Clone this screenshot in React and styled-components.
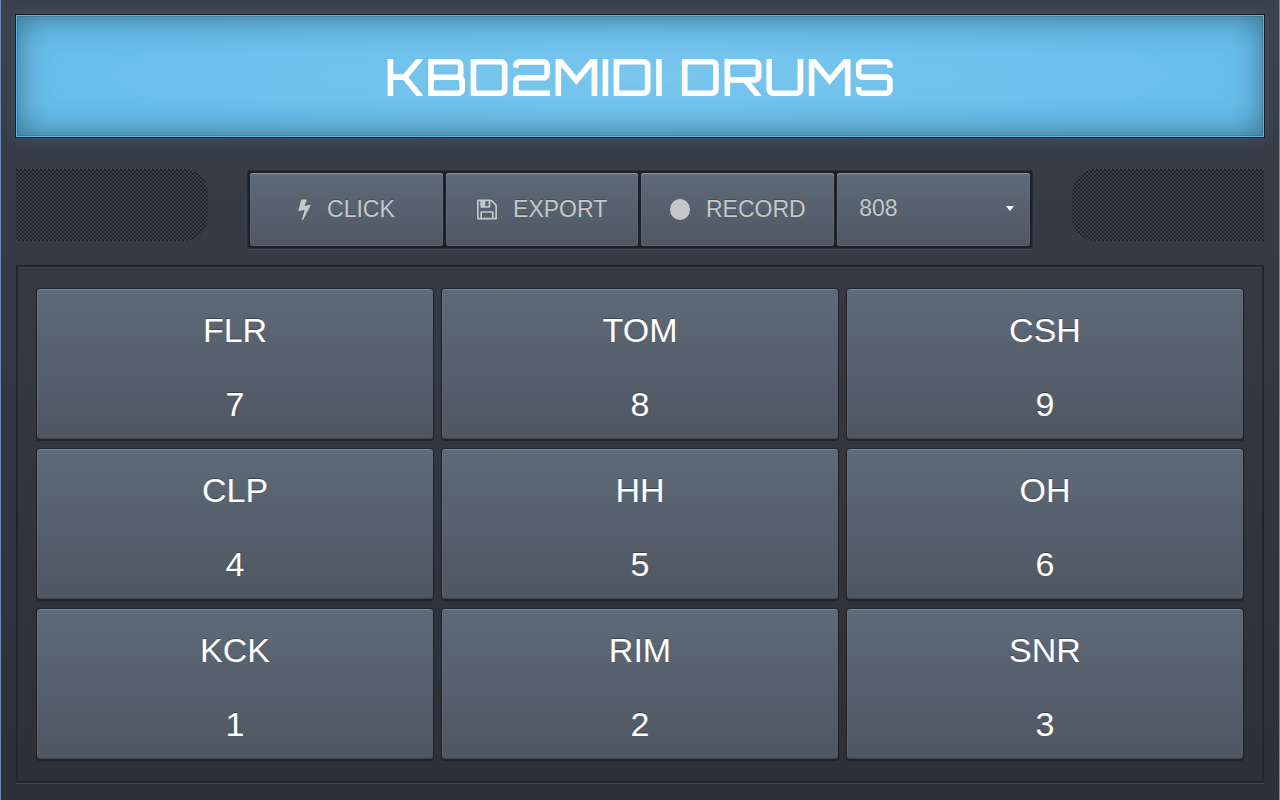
import React, { useState } from 'react';
import styled, { createGlobalStyle, css } from 'styled-components';

const GlobalStyle = createGlobalStyle`
  *, *::before, *::after { box-sizing: border-box; }
  body {
    margin: 0;
    background: #2d3138;
    font-family: "Liberation Sans", Arial, sans-serif;
  }
`;

const Page = styled.div`
  min-height: 100vh;
  padding: 14px 14px 16px;
  border: solid #6f85b5;
  border-width: 0 1px;
  background: linear-gradient(#3a414b 0%, #353b45 30%, #2c3037 100%);
`;

const Banner = styled.header`
  display: flex;
  align-items: center;
  justify-content: center;
  height: 124px;
  border: 1px solid #15202a;
  background: radial-gradient(ellipse at center, #7ac6ee 0%, #62bcea 90%);
  box-shadow:
    inset 0 0 0 1px #5cb4e2,
    inset 0 0 0 2px rgba(30, 70, 95, 0.25),
    inset 0 0 32px rgba(40, 70, 80, 0.7),
    0 0 14px rgba(95, 180, 220, 0.2);
`;

const Title = styled.h1`
  margin: 0;
  color: #fff;
  font: 500 51px/64px Orbitron, "DejaVu Sans", sans-serif;
`;

const Controls = styled.div`
  display: grid;
  grid-template-columns: 11fr 45fr 11fr;
  gap: 39px;
  align-items: start;
  margin: 31px 1px 16px;
`;

const Speaker = styled.div`
  height: 72px;
  border-radius: ${({ $side }) => ($side === 'left' ? '0 24px 24px 0' : '24px 0 0 24px')};
  background-image: conic-gradient(
    #3a414b 25%, #1f242a 0 50%, #3a414b 0 75%, #1f242a 0
  );
  background-size: 4px 4px;
`;

const Toolbar = styled.div`
  display: grid;
  grid-template-columns: repeat(4, 1fr);
  gap: 3px;
  margin-top: 1px;
  padding: 3px;
  border-radius: 4px;
  background: #1d2127;
  box-shadow: inset 0 0 0 1px #272b33, 0 1px 0 #454b54;
`;

const raised = css`
  background: linear-gradient(#5f6a78, #4f5763);
  box-shadow: inset 0 1px 0 #8b939d, inset 0 0 0 1px rgba(120, 130, 142, 0.25);
`;

const ToolButton = styled.button`
  ${raised}
  display: flex;
  align-items: center;
  justify-content: center;
  gap: 16px;
  height: 73px;
  padding: 0 0 1px;
  border: 0;
  border-radius: 3px;
  color: #c6c7c9;
  font: 23px/26px "Liberation Sans", Arial, sans-serif;
  text-shadow: 0 -1px 0 rgba(0, 0, 0, 0.25);
  cursor: pointer;
`;

const ToolIcon = styled.svg`
  width: ${({ $width }) => $width}px;
  height: 21px;
  fill: currentColor;
`;

const KitPicker = styled.label`
  position: relative;
  display: block;

  &::after {
    content: "";
    position: absolute;
    top: 33px;
    right: 16px;
    border: solid transparent;
    border-width: 5px 4px 0;
    border-top-color: #fff;
    pointer-events: none;
  }
`;

const KitSelect = styled.select`
  ${raised}
  appearance: none;
  width: 100%;
  height: 73px;
  padding: 0 32px 3px 22px;
  border: 0;
  border-radius: 3px;
  color: #c6c7c9;
  font: 23px/26px "Liberation Sans", Arial, sans-serif;
  text-shadow: 0 -1px 0 rgba(0, 0, 0, 0.25);
  cursor: pointer;
`;

const PadPanel = styled.main`
  display: grid;
  grid-template-columns: repeat(3, 1fr);
  gap: 8px 7px;
  margin: 0 1px;
  padding: 21px 18px 21px;
  border: 2px solid #22262c;
  box-shadow: inset 0 1px 0 #3f454e, 0 1px 0 #42474e;
`;

const Pad = styled.button`
  display: flex;
  flex-direction: column;
  align-items: center;
  justify-content: center;
  gap: 34px;
  height: 152px;
  padding: 6px 0 0;
  border: 1px solid #20242a;
  border-radius: 4px;
  background: linear-gradient(#5f6a78, #4e5661);
  box-shadow:
    inset 0 1px 0 #7f8791,
    inset 0 -1px 0 #3d444e,
    inset 1px 0 0 rgba(120, 130, 142, 0.3),
    0 1px 1px #20242a;
  color: #fff;
  font: 34px/40px "Liberation Sans", Arial, sans-serif;
  text-shadow: 0 -1px 0 rgba(0, 0, 0, 0.35);
  cursor: pointer;
`;

const BoltIcon = () => (
  <ToolIcon $width={13} viewBox="0 128 896 1536" aria-hidden="true">
    <path d="M885 566q18 20 7 44l-540 1029q-13 25-42 25-4 0-14-2-17-5-25.500-19t-4.500-30l197-700-406 101q-4 1-12 1-18 0-31-11-18-15-13-39l201-772q4-14 16-23t28-9h328q19 0 32 12.500t13 29.500q0 8-5 18l-171 420 396-98q8-2 12-2 19 0 34 25z" />
  </ToolIcon>
);

const FloppyIcon = () => (
  <ToolIcon $width={20} viewBox="0 128 1536 1536" aria-hidden="true">
    <path d="M384 1536h768v-384h-768v384zm896 0h128v-896q0-14-10-38.500t-20-34.500l-281-281q-10-10-34-20t-39-10v416q0 40-28 68t-68 28h-576q-40 0-68-28t-28-68v-416h-128v1280h128v-416q0-40 28-68t68-28h832q40 0 68 28t28 68v416zm-384-928v-320q0-13-9.500-22.500t-22.500-9.500h-192q-13 0-22.500 9.500t-9.500 22.500v320q0 13 9.500 22.500t22.500 9.500h192q13 0 22.500-9.500t9.500-22.500zm640 32v928q0 40-28 68t-68 28h-1344q-40 0-68-28t-28-68v-1344q0-40 28-68t68-28h928q40 0 88 20t76 48l280 280q28 28 48 76t20 88z" />
  </ToolIcon>
);

const RecordIcon = () => (
  <ToolIcon $width={20} viewBox="0 0 20 21" aria-hidden="true">
    <ellipse cx="10" cy="10.500" rx="10" ry="10.500" />
  </ToolIcon>
);

const pads = [
  ['FLR', '7'], ['TOM', '8'], ['CSH', '9'],
  ['CLP', '4'], ['HH', '5'], ['OH', '6'],
  ['KCK', '1'], ['RIM', '2'], ['SNR', '3'],
];

export default function App() {
  const [kit, setKit] = useState('808');

  return (
    <>
      <GlobalStyle />
      <Page>
        <Banner>
          <Title>KBD2MIDI DRUMS</Title>
        </Banner>
        <Controls>
          <Speaker $side="left" />
          <Toolbar>
            <ToolButton type="button"><BoltIcon />CLICK</ToolButton>
            <ToolButton type="button"><FloppyIcon />EXPORT</ToolButton>
            <ToolButton type="button"><RecordIcon />RECORD</ToolButton>
            <KitPicker>
              <KitSelect aria-label="Drum kit" value={kit} onChange={(e) => setKit(e.target.value)}>
                <option value="808">808</option>
              </KitSelect>
            </KitPicker>
          </Toolbar>
          <Speaker $side="right" />
        </Controls>
        <PadPanel>
          {pads.map(([name, key]) => (
            <Pad type="button" key={name}>
              <span>{name}</span>
              <span>{key}</span>
            </Pad>
          ))}
        </PadPanel>
      </Page>
    </>
  );
}
